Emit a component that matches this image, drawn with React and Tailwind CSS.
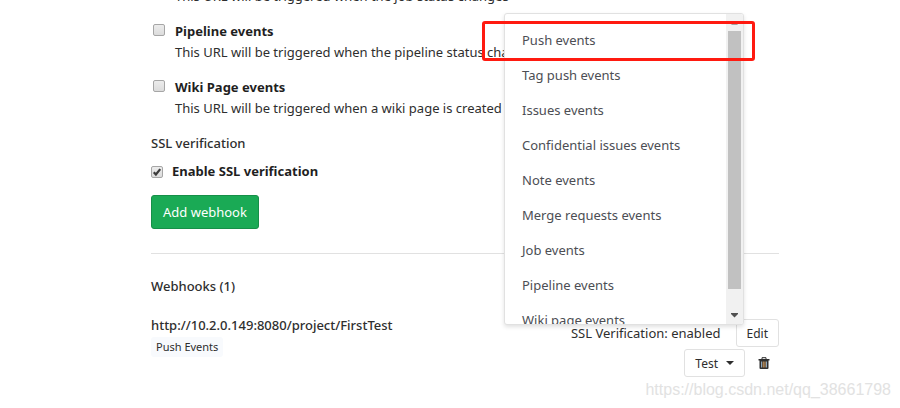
import { useState } from 'react'

const triggers = [
  { id: 'job', title: 'Job events', text: 'This URL will be triggered when the job status changes' },
  { id: 'pipeline', title: 'Pipeline events', text: 'This URL will be triggered when the pipeline status changes' },
  { id: 'wiki', title: 'Wiki Page events', text: 'This URL will be triggered when a wiki page is created' },
]

const testEvents = [
  'Push events',
  'Tag push events',
  'Issues events',
  'Confidential issues events',
  'Note events',
  'Merge requests events',
  'Job events',
  'Pipeline events',
  'Wiki page events',
]

function Checkbox({ id, checked, onChange }) {
  return (
    <span className="relative flex h-3 w-3 shrink-0">
      <input
        id={id}
        type="checkbox"
        checked={checked}
        onChange={onChange}
        className="h-3 w-3 appearance-none rounded-[2px] border border-[#a6a6a6] bg-linear-to-b from-[#ececec] to-[#dcdcdc]"
      />
      {checked && (
        <svg viewBox="0 0 13 13" className="pointer-events-none absolute inset-0 h-3 w-3">
          <path d="M3 6.8 5.3 9.2 10 3.4" fill="none" stroke="#3c3c3c" strokeWidth="2.4" />
        </svg>
      )}
    </span>
  )
}

function TestMenu() {
  return (
    <div className="absolute right-px bottom-[52px] z-10 w-[240px]">
      <div className="flex h-[312px] overflow-hidden rounded-[3px] border border-[#e1e1e1] bg-white shadow-[0_2px_4px_rgba(0,0,0,0.12)]">
        <ul className="flex-1 overflow-hidden pt-[9px] text-[#4c4e54]">
          {testEvents.map(name => (
            <li key={name}>
              <a href="#test" className="block px-[17px] leading-[35px]">{name}</a>
            </li>
          ))}
        </ul>
        <div className="flex w-[17px] flex-col items-center bg-[#f1f1f1]">
          <svg viewBox="0 0 17 17" className="h-[17px] w-[17px] shrink-0">
            <path d="M5 11h7L8.500 7z" fill="#a3a3a3" />
          </svg>
          <div className="h-[258px] w-[13px] bg-[#c1c1c1]" />
          <svg viewBox="0 0 17 17" className="mt-auto h-[17px] w-[17px] shrink-0">
            <path d="M5 6h7v1L8.500 10.500 5 7z" fill="#505050" />
          </svg>
        </div>
      </div>
      <div className="pointer-events-none absolute top-2 -right-[11px] -left-[22px] h-10 rounded-[3px] border-3 border-[#ff1a10]" />
    </div>
  )
}

export default function App() {
  const [enabled, setEnabled] = useState({ ssl: true })

  function toggle(id) {
    setEnabled({ ...enabled, [id]: !enabled[id] })
  }

  return (
    <div className="relative h-screen overflow-hidden bg-white font-['Noto_Sans','Open_Sans',sans-serif] text-[13px] leading-[21px] text-[#2e2e2e]">
      <main className="-mt-[35px] pr-[121px] pl-[151px]">
        <div className="flex flex-col gap-[14px]">
          {triggers.map(t => (
            <div key={t.id} className="flex gap-[10px] pl-[2px]">
              <div className="pt-[3px]">
                <Checkbox id={t.id} checked={!!enabled[t.id]} onChange={() => toggle(t.id)} />
              </div>
              <label htmlFor={t.id}>
                <strong className="block font-bold text-[#1f1f1f]">{t.title}</strong>
                <span className="block">{t.text}</span>
              </label>
            </div>
          ))}
        </div>

        <h5 className="mt-[14px] font-medium">SSL verification</h5>
        <div className="mt-[7px] flex items-center gap-[9px]">
          <Checkbox id="ssl" checked={enabled.ssl} onChange={() => toggle('ssl')} />
          <label htmlFor="ssl" className="font-bold text-[#1f1f1f]">Enable SSL verification</label>
        </div>
        <button className="mt-[13px] h-[34px] rounded-[3px] border border-[#168f48] bg-[#1aaa55] px-[11px] text-white">Add webhook</button>

        <hr className="mt-6 border-[#e1e1e1]" />
        <h5 className="mt-[22px] font-medium">Webhooks (1)</h5>

        <div className="mt-[18px] flex items-start justify-between">
          <div>
            <div className="font-medium">http://10.2.0.149:8080/project/FirstTest</div>
            <span className="inline-block rounded-[3px] bg-[#f8fafd] px-[5px] text-[11px] leading-5">Push Events</span>
          </div>
          <div className="mt-[4px] flex flex-col gap-[2px]">
            <div className="flex items-center justify-end gap-[15px]">
              <span>SSL Verification: enabled</span>
              <button className="h-7 rounded-[3px] border border-[#e1e1e1] px-[10px] text-[12px]">Edit</button>
            </div>
            <div className="flex items-center justify-end gap-1">
              <div className="relative">
                <button className="flex h-7 items-center gap-2 rounded-[3px] border border-[#e1e1e1] px-[10px] text-[12px]">
                  Test
                  <svg viewBox="0 0 8 4" className="h-1 w-2">
                    <path d="M0 0h8L4 4z" fill="#2e2e2e" />
                  </svg>
                </button>
                <TestMenu />
              </div>
              <button aria-label="Remove" className="flex h-7 w-[30px] items-center justify-center">
                <svg viewBox="0 0 12 12" className="h-3 w-3">
                  <path d="M4 2V.7h4V2" fill="none" stroke="#2e2e2e" />
                  <path d="M.5 2h11v1.500H.5z" fill="#2e2e2e" />
                  <path d="M1.500 3h9v8q0 1-1 1h-7q-1 0-1-1z" fill="#2e2e2e" />
                  <path d="M3.500 4.500v6M8.500 4.500v6" stroke="#8ca6bd" />
                  <path d="M5.200 4.500v6M7 4.500v6" stroke="#e0a766" />
                </svg>
              </button>
            </div>
          </div>
        </div>
      </main>
      <p className="absolute right-[9px] bottom-2 font-['Liberation_Sans',sans-serif] text-[16px] text-[#e2e2e2]">https://blog.csdn.net/qq_38661798</p>
    </div>
  )
}
